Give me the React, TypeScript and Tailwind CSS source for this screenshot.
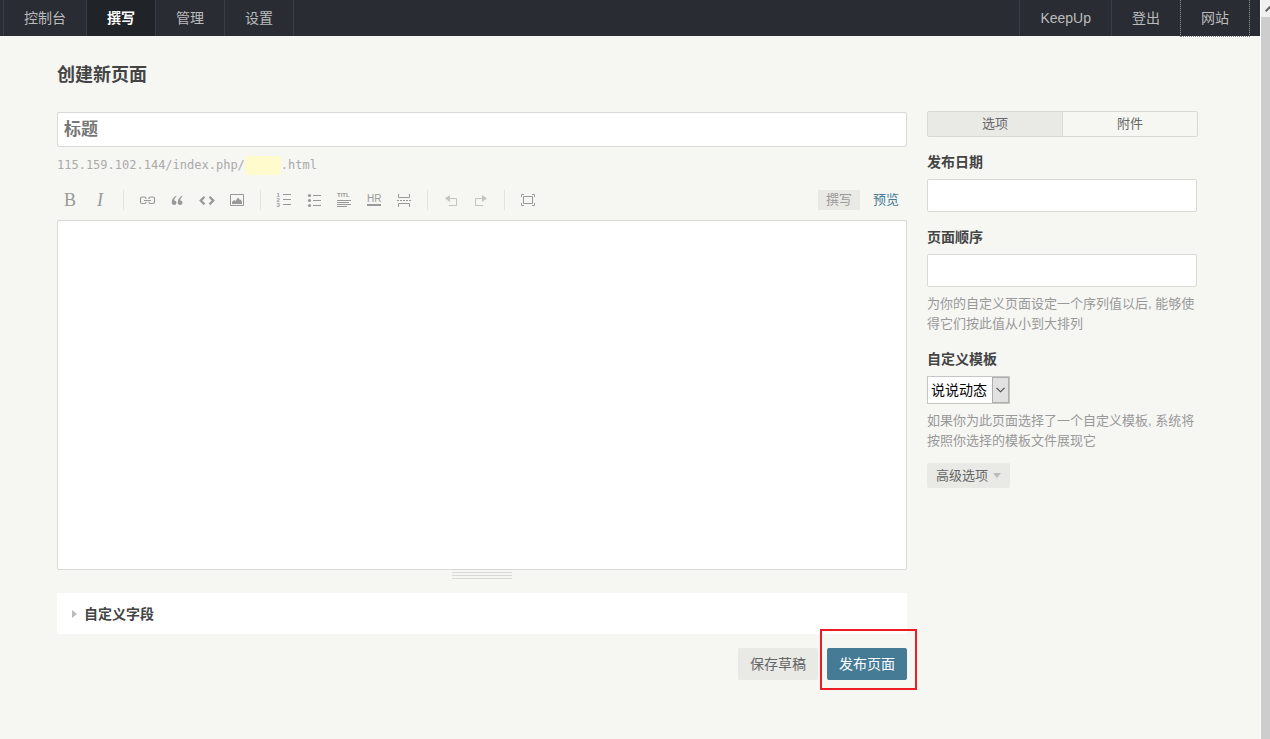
import type { ReactNode } from "react";

type NavItem = { label: string; active?: boolean; focused?: boolean };

const leftNav: NavItem[] = [
  { label: "控制台" },
  { label: "撰写", active: true },
  { label: "管理" },
  { label: "设置" },
];

const rightNav: NavItem[] = [
  { label: "KeepUp" },
  { label: "登出" },
  { label: "网站", focused: true },
];

function NavLink({ item }: { item: NavItem }) {
  const tone = item.active
    ? "bg-[#202328] font-bold text-white"
    : "text-[#bbbbbb]";
  const ring = item.focused ? "outline-1 outline-dotted outline-[#888888]" : "";
  return (
    <a href="#" className={`block px-5 text-sm leading-9 ${tone} ${ring}`}>
      {item.label}
    </a>
  );
}

function TopNav() {
  return (
    <nav className="flex h-9 justify-between bg-[#292d33] pr-2.5 pl-[3px]">
      <ul className="flex border-l border-[#383d45]">
        {leftNav.map((item) => (
          <li key={item.label} className="border-r border-[#383d45]">
            <NavLink item={item} />
          </li>
        ))}
      </ul>
      <ul className="flex border-r border-[#383d45]">
        {rightNav.map((item) => (
          <li key={item.label} className="border-l border-[#383d45]">
            <NavLink item={item} />
          </li>
        ))}
      </ul>
    </nav>
  );
}

function Icon({ children }: { children: ReactNode }) {
  return (
    <svg
      width="20"
      height="20"
      viewBox="0 0 20 20"
      fill="none"
      stroke="currentColor"
      aria-hidden="true"
    >
      {children}
    </svg>
  );
}

function Tool({
  label,
  faded,
  children,
}: {
  label: string;
  faded?: boolean;
  children: ReactNode;
}) {
  return (
    <button
      type="button"
      aria-label={label}
      className={`flex h-5 w-[30px] items-center justify-center ${
        faded ? "text-[#c4c4c2]" : "text-[#999999]"
      }`}
    >
      {children}
    </button>
  );
}

function Divider() {
  return <span className="mx-2 h-5 w-px bg-[#e4e4e1]" />;
}

function Toolbar() {
  return (
    <div className="mt-[15px] flex items-center justify-between">
      <div className="-ml-0.5 flex items-center">
        <Tool label="加粗">
          <span className="font-['Liberation_Serif',serif] text-lg leading-5">B</span>
        </Tool>
        <Tool label="斜体">
          <span className="font-['Liberation_Serif',serif] text-lg leading-5 italic">I</span>
        </Tool>
        <Divider />
        <Tool label="链接">
          <Icon>
            <path
              strokeWidth="1.2"
              d="M9 9V8.5A1.5 1.5 0 0 0 7.5 7H5A1.5 1.5 0 0 0 3.5 8.5V12A1.5 1.5 0 0 0 5 13.5H7.5A1.5 1.5 0 0 0 9 12V11.8M12 9V8.5A1.5 1.5 0 0 1 13.5 7H16A1.5 1.5 0 0 1 17.5 8.5V12A1.5 1.5 0 0 1 16 13.5H13.5A1.5 1.5 0 0 1 12 12V11.8M7 10.5H14"
            />
          </Icon>
        </Tool>
        <Tool label="引用">
          <Icon>
            <path
              stroke="none"
              fill="currentColor"
              d="M9.3 5.8C7 7 4.7 9 4.7 12.3C4.7 14 5.7 15 7.1 15C8.4 15 9.4 14 9.4 12.7C9.4 11.4 8.5 10.5 7.3 10.5C7.3 9 8.2 7.4 9.6 6.3ZM15.3 5.8C13 7 10.7 9 10.7 12.3C10.7 14 11.7 15 13.1 15C14.4 15 15.4 14 15.4 12.7C15.4 11.4 14.5 10.5 13.3 10.5C13.3 9 14.2 7.4 15.6 6.3Z"
            />
          </Icon>
        </Tool>
        <Tool label="代码">
          <Icon>
            <path strokeWidth="2.2" d="M7.5 6.8L3.7 10.6L7.5 14.4M12.5 6.8L16.3 10.6L12.5 14.4" />
          </Icon>
        </Tool>
        <Tool label="图片">
          <Icon>
            <path d="M3.5 4.5H16.5V15.5H3.5Z" />
            <path
              stroke="none"
              fill="currentColor"
              d="M5 14V12L7 10L8.5 11L11 7.5L13 10L14 9.5L15 12V14Z"
            />
          </Icon>
        </Tool>
        <Divider />
        <Tool label="数字列表">
          <Icon>
            <path d="M9 4.5H17M9 9.5H17M9 14.5H17" />
            <g
              stroke="none"
              fill="currentColor"
              fontSize="6"
              fontWeight="700"
              fontFamily="Liberation Sans, sans-serif"
            >
              <text x="2.5" y="7">1</text>
              <text x="2.5" y="12">2</text>
              <text x="2.5" y="17">3</text>
            </g>
          </Icon>
        </Tool>
        <Tool label="普通列表">
          <Icon>
            <path d="M9 5.5H17M9 10.5H17M9 15.5H17" />
            <g stroke="none" fill="currentColor">
              <circle cx="5.5" cy="5.5" r="1.6" />
              <circle cx="5.5" cy="10.5" r="1.6" />
              <circle cx="5.5" cy="15.5" r="1.6" />
            </g>
          </Icon>
        </Tool>
        <Tool label="标题">
          <Icon>
            <text
              x="3"
              y="7"
              stroke="none"
              fill="currentColor"
              fontSize="6"
              fontWeight="700"
              fontFamily="Liberation Sans, sans-serif"
            >
              TITL
            </text>
            <path d="M3 10.5H17M3 12.5H15M3 14.5H17M3 16.5H13" />
          </Icon>
        </Tool>
        <Tool label="分割线">
          <Icon>
            <text
              x="3"
              y="12"
              stroke="none"
              fill="currentColor"
              fontSize="10"
              fontFamily="Liberation Sans, sans-serif"
            >
              HR
            </text>
            <path strokeWidth="2" d="M3 15H17" />
          </Icon>
        </Tool>
        <Tool label="摘要分割线">
          <Icon>
            <path d="M4.5 4V7.5H15.5V4M4.5 17V13.5H15.5V17" />
            <path strokeDasharray="2 1" d="M3 10.5H17" />
          </Icon>
        </Tool>
        <Divider />
        <Tool label="撤销" faded>
          <Icon>
            <path d="M8 8.5H15.5V15.5H8" />
            <path stroke="none" fill="currentColor" d="M4 8.5L9 5V12Z" />
          </Icon>
        </Tool>
        <Tool label="重做" faded>
          <Icon>
            <path d="M12 8.5H4.5V15.5H12" />
            <path stroke="none" fill="currentColor" d="M16 8.5L11 5V12Z" />
          </Icon>
        </Tool>
        <Divider />
        <Tool label="全屏">
          <Icon>
            <path d="M5.5 6.5H14.5V13.5H5.5ZM3.5 7V4.5H6M14 4.5H16.5V7M16.5 13V15.5H14M6 15.5H3.5V13" />
          </Icon>
        </Tool>
      </div>
      <div className="flex gap-[5px] text-[13px] leading-5">
        <button type="button" className="bg-[#e9e9e6] px-2 text-[#999999]">
          撰写
        </button>
        <button type="button" className="px-2 text-[#467b96]">
          预览
        </button>
      </div>
    </div>
  );
}

function Editor() {
  return (
    <section className="min-w-0 flex-1 pt-px">
      <input
        type="text"
        aria-label="标题"
        placeholder="标题"
        className="block h-[35px] w-full rounded-xs border border-[#d9d9d6] bg-white px-1.5 text-[17px] font-bold placeholder:text-[#777777]"
      />
      <div className="mt-2 flex h-5 items-center font-['DejaVu_Sans_Mono',monospace] text-xs text-[#aaaaaa]">
        <label htmlFor="slug">115.159.102.144/index.php/</label>
        <input id="slug" type="text" className="h-[19px] w-9 rounded-xs bg-[#fffbcc]" />
        <span>.html</span>
      </div>
      <Toolbar />
      <textarea
        aria-label="页面内容"
        className="mt-2.5 block h-[350px] w-full resize-none rounded-xs border border-[#d9d9d6] bg-white p-2"
      />
      <div className="mx-auto mt-0.5 flex w-[60px] flex-col gap-0.5">
        <span className="h-px bg-[#d9d9d6]" />
        <span className="h-px bg-[#d9d9d6]" />
        <span className="h-px bg-[#d9d9d6]" />
      </div>
      <button
        type="button"
        className="mt-3.5 flex h-[41px] w-full items-center gap-[7px] bg-white px-[15px] text-sm font-bold text-[#444444]"
      >
        <svg width="5" height="8" viewBox="0 0 5 8" aria-hidden="true">
          <path d="M0 0L5 4L0 8Z" fill="#bbbbbb" />
        </svg>
        自定义字段
      </button>
      <div className="mt-3.5 flex justify-end gap-[9px] text-sm leading-8">
        <button type="button" className="w-20 rounded-xs bg-[#e9e9e6] text-[#666666]">
          保存草稿
        </button>
        <div className="relative">
          <button type="button" className="block w-20 rounded-xs bg-[#467b96] text-white">
            发布页面
          </button>
          <span className="pointer-events-none absolute -top-[19px] -right-2.5 -bottom-2.5 -left-[7px] border-2 border-[#ed1c24]" />
        </div>
      </div>
    </section>
  );
}

const labelClass = "mt-[15px] block text-sm leading-5 font-bold text-[#444444]";
const fieldClass =
  "mt-[7px] block h-[33px] w-full rounded-xs border border-[#d9d9d6] bg-white px-2 text-sm";
const hintClass = "mt-[7px] text-[13px] leading-5 text-[#999999]";

function Sidebar() {
  return (
    <aside className="w-[271px] shrink-0">
      <div className="flex h-[26px] rounded-xs border border-[#d9d9d6] text-[13px] text-[#666666]">
        <button type="button" className="flex-1 border-r border-[#d9d9d6] bg-[#e9e9e6]">
          选项
        </button>
        <button type="button" className="flex-1">
          附件
        </button>
      </div>
      <div className="pr-px">
        <label htmlFor="date" className={labelClass}>发布日期</label>
        <input id="date" type="text" className={fieldClass} />
        <label htmlFor="order" className={labelClass}>页面顺序</label>
        <input id="order" type="text" className={fieldClass} />
        <p className={hintClass}>
          为你的自定义页面设定一个序列值以后, 能够使得它们按此值从小到大排列
        </p>
        <label htmlFor="template" className={labelClass}>自定义模板</label>
        <div className="relative mt-[7px] w-[83px]">
          <select
            id="template"
            className="block h-7 w-full appearance-none border border-[#c6c6c4] bg-white pl-[3px] text-sm text-black"
          >
            <option>说说动态</option>
          </select>
          <span className="pointer-events-none absolute inset-y-px right-px flex w-[17px] items-center justify-center border border-[#adadad] bg-[#e1e1e1]">
            <svg width="9" height="6" viewBox="0 0 9 6" fill="none" aria-hidden="true">
              <path d="M0.5 0.8L4.5 4.8L8.5 0.8" stroke="#444444" strokeWidth="1.1" />
            </svg>
          </span>
        </div>
        <p className={hintClass}>
          如果你为此页面选择了一个自定义模板, 系统将按照你选择的模板文件展现它
        </p>
        <button
          type="button"
          className="mt-3 flex h-[25px] items-center gap-[5px] rounded-xs bg-[#e9e9e6] px-[9px] text-[13px] text-[#666666]"
        >
          高级选项
          <svg width="8" height="5" viewBox="0 0 8 5" aria-hidden="true">
            <path d="M0 0H8L4 5Z" fill="#bbbbbb" />
          </svg>
        </button>
      </div>
    </aside>
  );
}

function ScrollRail() {
  return (
    <div className="w-[10px] shrink-0 overflow-hidden border-l border-white bg-[#cdcdcd]" aria-hidden="true">
      <div className="h-[17px] bg-[#f0f0f0] pt-[6px] pl-1">
        <svg width="9" height="6" viewBox="0 0 9 6" fill="none">
          <path d="M0.7 5.2L4.5 1.4L8.3 5.2" stroke="#606060" strokeWidth="2" />
        </svg>
      </div>
    </div>
  );
}

export default function App() {
  return (
    <div className="flex min-h-screen bg-[#f6f6f3] font-['Liberation_Sans','Noto_Sans_CJK_SC',sans-serif] text-[#444444]">
      <div className="min-w-0 flex-1">
        <TopNav />
        <main className="pt-[27px] pr-[62px] pb-10 pl-[57px]">
          <h2 className="text-lg leading-6 font-bold">创建新页面</h2>
          <div className="mt-6 flex gap-5">
            <Editor />
            <Sidebar />
          </div>
        </main>
      </div>
      <ScrollRail />
    </div>
  );
}
